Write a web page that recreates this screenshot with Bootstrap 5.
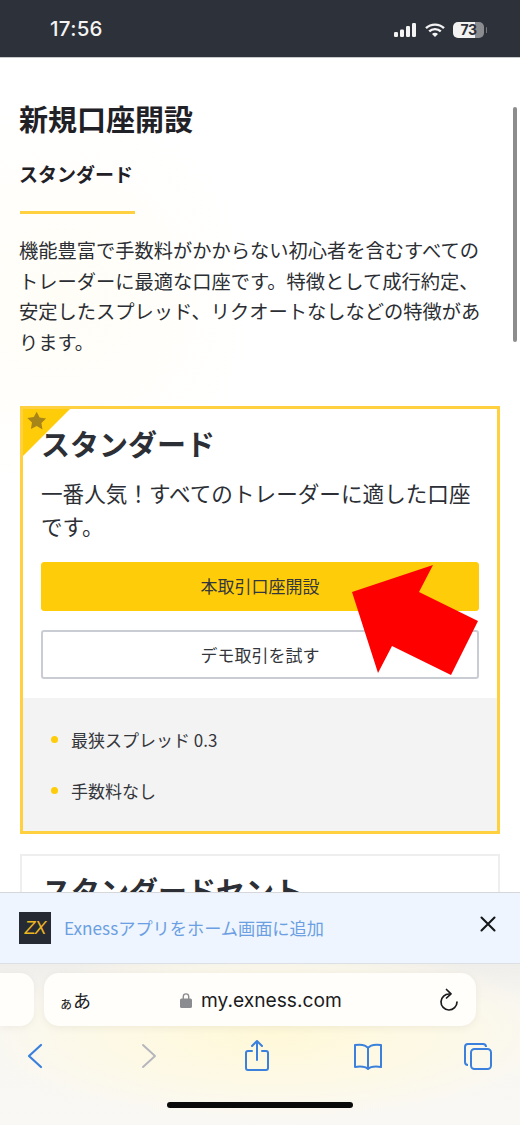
<!DOCTYPE html>
<html lang="ja">
<head>
<meta charset="utf-8">
<title>新規口座開設</title>
<link href="https://cdn.jsdelivr.net/npm/bootstrap@5.3.0/dist/css/bootstrap.min.css" rel="stylesheet">
<style>
html,body{margin:0;height:1125px;overflow:hidden;background:#fff}
body{font-family:"Noto Sans CJK JP","Liberation Sans",sans-serif;color:#25282e}
.shell{position:relative;width:520px;height:1125px;overflow:hidden}
.statusbar{height:58px;background:#2d313a;border-bottom:1px solid #c9c9c9;color:#f4f4f4;padding:2px 0 0 50px;flex:none}
.clock{font:500 20.5px/1 Inter,sans-serif;letter-spacing:.3px}
.sysicons{margin-left:auto;margin-right:36px;gap:7px}
.batt{position:relative;width:31px;height:16px;border-radius:5px;background:linear-gradient(90deg,#f2f2f2 70%,#8a8c8f 70%);color:#2d313a;font:700 14px/16px Inter,sans-serif;text-align:center;letter-spacing:-.5px}
.batt::after{content:"";position:absolute;right:-3px;top:5px;width:1.5px;height:6px;background:#777;border-radius:1px}
.mainview{flex:1 1 0;min-height:0;overflow:hidden;padding:41px 20px 0;background:radial-gradient(circle at 60px 240px,#fffdf6 0,#fff 200px)}
.pagetitle{font-size:29px;line-height:38px;font-weight:700;margin:0 0 0 -1px;color:#1f2126}
.subtitle{font-size:19px;line-height:30px;font-weight:700;margin:22px 0 0 -1px;color:#1f2126}
.rule{width:115px;height:3px;background:#ffd040;margin-top:22px}
.intro{font-size:19.25px;line-height:30.7px;margin:21px 0 0 -1px;width:470px;color:#2b2e33}
.plan{border-radius:0;background:#fff;overflow:hidden}
.plan-hi{border:3px solid #ffd040;margin-top:48px;height:428px}
.plan-lo{border:2px solid #eeeeee;margin-top:20px}
.plan-body{padding:15px 18px 0}
.plan-lo .plan-body{padding:15px 20px 0}
.plan-title{font-size:29px;line-height:38px;font-weight:700;margin:0;color:#2c2f35}
.plan-desc{font-size:21.6px;line-height:33px;margin:14px 0 0;color:#2c2f35}
.ribbon{position:absolute;left:0;top:0}
.btn-real,.btn-demo{font-size:17px;line-height:25px;height:49px;border-radius:3px;color:#33363b}
.btn-real{background:#ffcc0a;border:1px solid #ffcc0a;margin-top:20px;padding:10px 0}
.btn-demo{background:#fff;border:2px solid #c9ccd2;margin-top:19px;padding:10px 0}
.feats{background:#f3f3f3;margin:19px 0 0;padding:30px 0 30px 28px;gap:27px;font-size:17px;line-height:24px;color:#33363b}
.dot{width:7px;height:7px;border-radius:50%;background:#ffcc0a;margin-right:13px}
.bottomwrap{height:233px;border-top:1px solid #d5d7da;flex:none}
.banner{height:71px;background:#eef5fe;border-bottom:1px solid #dcdfe3;padding:0 24px 0 19px;position:relative}
.applogo{width:32px;height:32px;background:#262a33;color:#ecb522;font:italic 400 18px/32px "Liberation Sans",sans-serif;text-align:center;letter-spacing:-1px;margin-right:13px;margin-top:-1px}
.bannertext{font-size:17.2px;color:#6b9fe2;line-height:1}
.closex{margin-left:auto;margin-top:-8px}
.safari{height:161px;background:radial-gradient(ellipse 300px 90px at 270px 70px,#fff8d8 0,#fdf9e8 60%,rgba(248,247,243,0) 100%),linear-gradient(#f0eeea,#f7f6f2 25%,#f9f8f5);padding-top:9px}
.pills{gap:10px;height:53px}
.pill-side{width:34px;height:53px;background:#fffefa;border-radius:0 14px 14px 0;box-shadow:0 2px 8px rgba(0,0,0,.05)}
.pill-url{width:432px;height:53px;background:#fffefb;border-radius:15px;padding:0 16px 0 15px;position:relative;box-shadow:0 2px 8px rgba(0,0,0,.06)}
.aa{font-size:18px;color:#1b1b1d;line-height:1}
.aa small{font-size:14px}
.urlmid{position:absolute;left:136px;top:0;height:53px;gap:9px}
.urltext{font:400 19.2px/1 Inter,sans-serif;color:#1b1b1d;padding-top:2px}
.reload{margin-left:auto;margin-right:1px}
.toolbar{padding:14px 26px 0 19px;height:62px}
.homebar{width:186px;height:6px;border-radius:3px;background:#0a0a0a;margin:14px auto 0 167px}
.scrolltrack{position:absolute;left:513px;top:107px;width:4px;height:235px;border-radius:2px;background:#8d8d8d}
.pointer{position:absolute;left:340px;top:550px}
</style>
</head>
<body>
<div class="shell d-flex flex-column">
  <header class="statusbar d-flex align-items-center">
    <span class="clock">17:56</span>
    <div class="sysicons d-flex align-items-center">
      <svg width="24" height="16" viewBox="0 0 24 16" fill="#f4f4f4"><rect x="1" y="10" width="4" height="5" rx="1.2"/><rect x="7" y="7.5" width="4" height="7.5" rx="1.2"/><rect x="13" y="4" width="4" height="11" rx="1.2"/><rect x="19" y="1" width="4" height="14" rx="1.2"/></svg>
      <svg width="22" height="16" viewBox="0 0 22 16" fill="none" stroke="#f4f4f4" stroke-width="2.4"><path d="M2 6.2a13 13 0 0 1 18 0"/><path d="M5.2 9.4a8.4 8.4 0 0 1 11.6 0"/><path d="M11 15l-3-3a4.2 4.2 0 0 1 6 0z" fill="#f4f4f4" stroke="none"/></svg>
      <div class="batt">73</div>
    </div>
  </header>

  <main class="mainview">
    <h1 class="pagetitle">新規口座開設</h1>
    <h2 class="subtitle">スタンダード</h2>
    <div class="rule"></div>
    <p class="intro">機能豊富で手数料がかからない初心者を含むすべてのトレーダーに最適な口座です。特徴として成行約定、安定したスプレッド、リクオートなしなどの特徴があります。</p>

    <section class="card plan plan-hi position-relative">
      <svg class="ribbon" width="50" height="50" viewBox="0 0 50 50"><path d="M0 0H47L0 47z" fill="#ffcc0a"/><path transform="translate(-1.3 -0.8)" d="M15 3.5l2.9 5.9 6.5.9-4.7 4.6 1.1 6.5L15 17.8l-5.8 3.1 1.1-6.5-4.7-4.6 6.5-.9z" fill="#a88518"/></svg>
      <div class="plan-body position-relative">
        <h3 class="plan-title">スタンダード</h3>
        <p class="plan-desc">一番人気！すべてのトレーダーに適した口座です。</p>
        <a class="btn btn-real w-100 d-block" href="#">本取引口座開設</a>
        <a class="btn btn-demo w-100 d-block" href="#">デモ取引を試す</a>
      </div>
      <ul class="feats list-unstyled d-flex flex-column">
        <li class="d-flex align-items-center"><span class="dot"></span>最狭スプレッド 0.3</li>
        <li class="d-flex align-items-center"><span class="dot"></span>手数料なし</li>
      </ul>
    </section>

    <section class="card plan plan-lo">
      <div class="plan-body"><h3 class="plan-title">スタンダードセント</h3></div>
    </section>
  </main>

  <div class="bottomwrap">
    <div class="banner d-flex align-items-center">
      <div class="applogo">ZX</div>
      <span class="bannertext">Exnessアプリをホーム画面に追加</span>
      <svg class="closex" width="16" height="16" viewBox="0 0 16 16" stroke="#15171a" stroke-width="2.1" stroke-linecap="round"><path d="M1.5 1.5l13 13M14.5 1.5l-13 13"/></svg>
    </div>
    <div class="safari">
      <div class="pills d-flex">
        <div class="pill-side"></div>
        <div class="pill-url d-flex align-items-center">
          <span class="aa"><small>ぁ</small>あ</span>
          <div class="urlmid d-flex align-items-center">
            <svg width="12" height="16" viewBox="0 0 12 16" fill="#8b8c90"><path d="M2.6 7V4.6a3.4 3.4 0 0 1 6.8 0V7H8V4.6a2 2 0 0 0-4 0V7z"/><rect y="6.5" width="12" height="9.5" rx="1.6"/></svg>
            <span class="urltext">my.exness.com</span>
          </div>
          <svg class="reload" width="20" height="24" viewBox="0 0 20 24" fill="none" stroke="#1b1b1d" stroke-width="1.7" stroke-linecap="round" stroke-linejoin="round"><path d="M10.5 6A8 8 0 1 0 18 14"/><path d="M7.5 1.5L12 5.8 7.5 10"/></svg>
        </div>
      </div>
      <nav class="toolbar d-flex justify-content-between">
        <svg width="32" height="32" viewBox="0 0 32 32" fill="none" stroke="#3a80dc" stroke-width="2.2" stroke-linecap="round" stroke-linejoin="round"><path d="M22 5L10 16l12 11"/></svg>
        <svg width="32" height="32" viewBox="0 0 32 32" fill="none" stroke="#b5b5bd" stroke-width="1.9" stroke-linecap="round" stroke-linejoin="round"><path d="M13 5l12 11-12 11"/></svg>
        <svg width="32" height="32" viewBox="0 0 32 32" fill="none" stroke="#3a80dc" stroke-width="2" stroke-linecap="round" stroke-linejoin="round"><path d="M11 11H7a2 2 0 0 0-2 2v15a2 2 0 0 0 2 2h18a2 2 0 0 0 2-2V13a2 2 0 0 0-2-2h-4"/><path d="M16 20V1M11 6l5-5 5 5"/></svg>
        <svg width="32" height="32" viewBox="0 0 32 32" fill="none" stroke="#3a80dc" stroke-width="2" stroke-linecap="round" stroke-linejoin="round"><g transform="translate(1 0)"><path d="M16 8c-2-3-6-4-13-3v22c7-1 11 0 13 2 2-2 6-3 13-2V5c-7-1-11 0-13 3zM16 8v20"/></g></svg>
        <svg width="32" height="32" viewBox="0 0 32 32" fill="none" stroke="#3a80dc" stroke-width="2" stroke-linejoin="round"><path d="M6 25a3 3 0 0 1-3-3V7a3 3 0 0 1 3-3h15a3 3 0 0 1 3 3"/><rect x="9" y="9" width="20" height="20" rx="3.5"/></svg>
      </nav>
      <div class="homebar"></div>
    </div>
  </div>

  <div class="scrolltrack"></div>
  <svg class="pointer" width="150" height="130" viewBox="0 0 150 130"><path d="M12 42L93 15 79 42 138 71 111 125 52 96 38 123z" fill="#ff0000"/></svg>
</div>
<script src="https://cdn.jsdelivr.net/npm/bootstrap@5.3.0/dist/js/bootstrap.bundle.min.js"></script>
</body>
</html>
